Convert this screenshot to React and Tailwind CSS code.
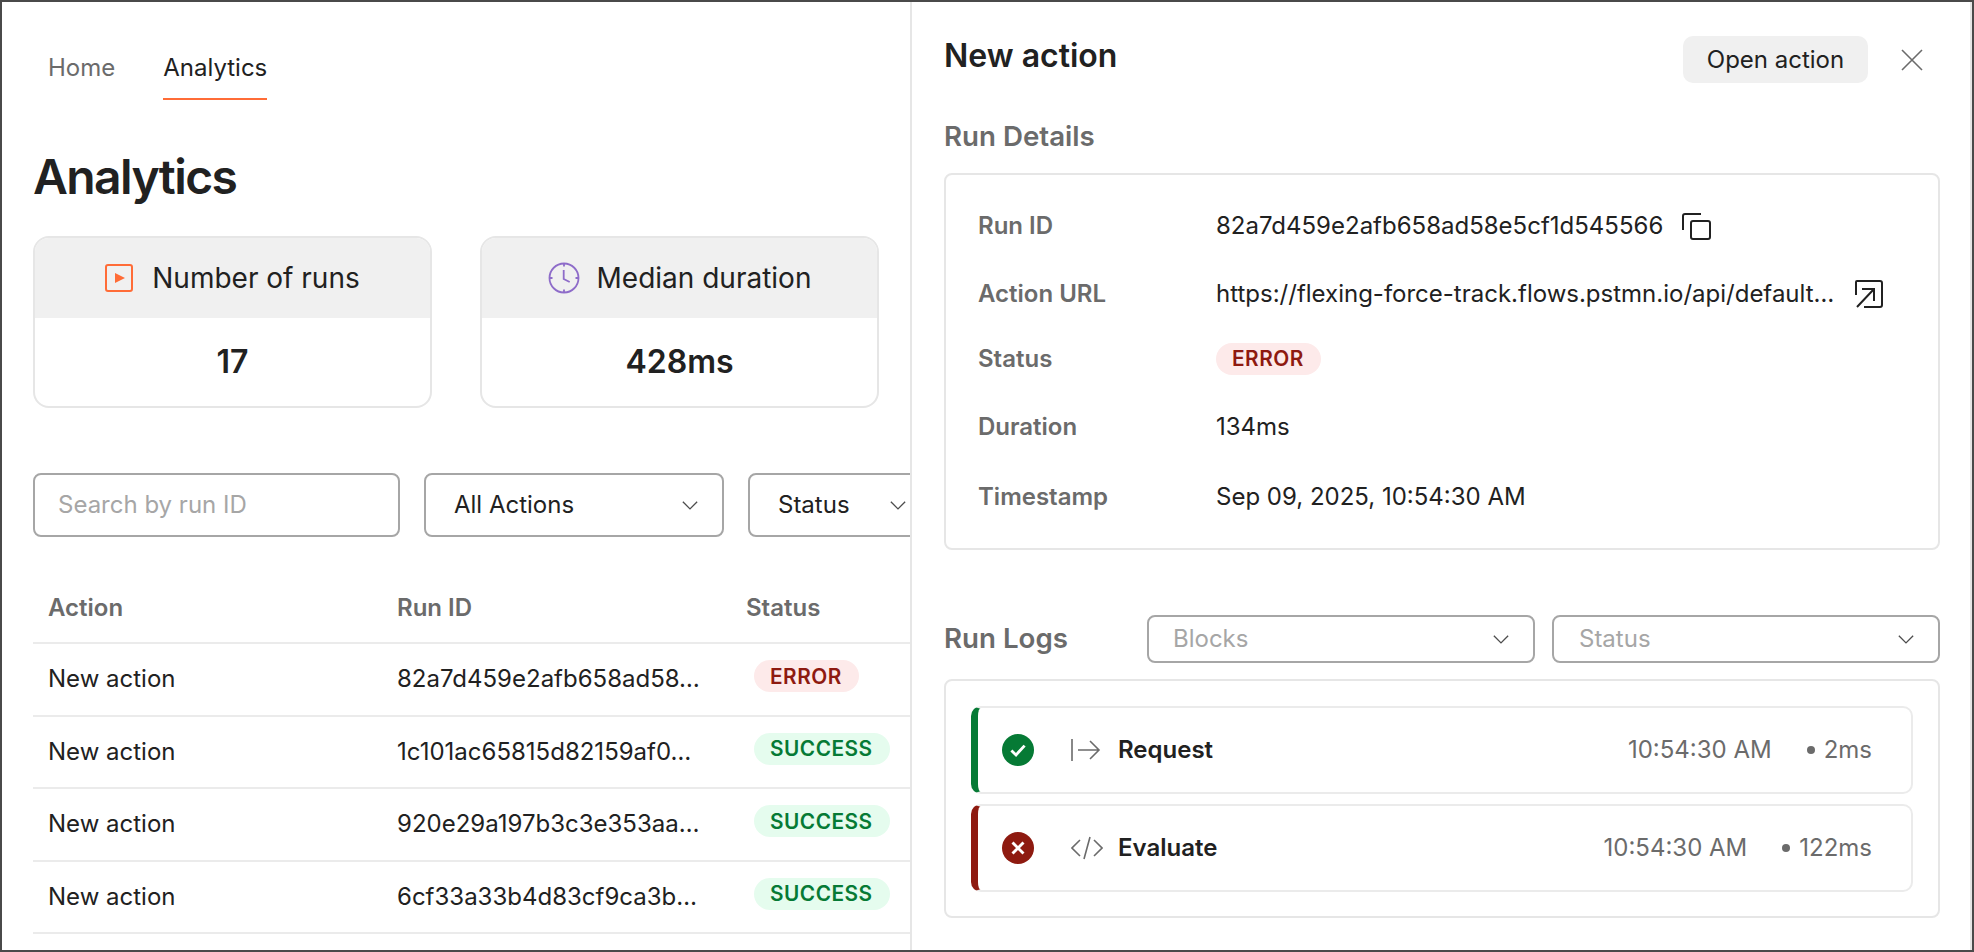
import React from "react";

const font = { fontFamily: "Inter, 'Liberation Sans', sans-serif" };

function Chevron({ className }) {
  return (
    <svg viewBox="0 0 20 20" fill="none" stroke="currentColor" strokeWidth="1.2" className={className}>
      <path d="M3.5 7 L10 13.5 L16.5 7" />
    </svg>
  );
}

function Select({ label, placeholder, className, chevronGap }) {
  return (
    <div className={`flex items-center justify-between rounded-[8px] border-2 border-[#a6a6a6] bg-white ${className}`}>
      <span className={placeholder ? "text-[#a6a6a6]" : "text-[#212121]"}>{label}</span>
      <Chevron className={`h-[22px] w-[22px] shrink-0 text-[#4d4d4d] ${chevronGap || ""}`} />
    </div>
  );
}

function Badge({ kind, className }) {
  const ok = kind === "SUCCESS";
  return (
    <span
      className={`inline-flex h-[32px] items-center rounded-full pr-[17px] pl-[16px] text-[20.8px] font-semibold tracking-[0.5px] ${
        ok ? "bg-[#e5fcee] text-[#067a35]" : "bg-[#fdeaea] text-[#8e1a10]"
      } ${className || ""}`}
    >
      {kind}
    </span>
  );
}

const rows = [
  ["82a7d459e2afb658ad58…", "ERROR"],
  ["1c101ac65815d82159af0…", "SUCCESS"],
  ["920e29a197b3c3e353aa…", "SUCCESS"],
  ["6cf33a33b4d83cf9ca3b…", "SUCCESS"],
];

function StatCard({ icon, title, value, gap }) {
  return (
    <div className="h-[172px] w-[399px] overflow-hidden rounded-[16px] border-2 border-[#e6e6e6]">
      <div className={`flex h-[80px] items-center justify-center bg-[#f0f0f0] text-[28px] text-[#212121] ${gap}`}>
        {icon}
        <span>{title}</span>
      </div>
      <div className="flex h-[88px] items-center justify-center text-[32px] font-semibold text-[#212121]">{value}</div>
    </div>
  );
}

function DetailRow({ label, children, className }) {
  return (
    <div className={`flex items-center ${className}`}>
      <div className="w-[238px] shrink-0 font-semibold text-[#6b6b6b]">{label}</div>
      <div className="flex items-center text-[#212121]">{children}</div>
    </div>
  );
}

function LogRow({ ok, name, icon, time, dur, className }) {
  return (
    <div
      className={`flex h-[88px] items-center rounded-[10px] border-2 border-l-[7px] border-[#ebebeb] ${
        ok ? "border-l-[#067a35]" : "border-l-[#8e1a10]"
      } ${className || ""}`}
    >
      <div className={`ml-[24px] flex h-[32px] w-[32px] items-center justify-center rounded-full ${ok ? "bg-[#067a35]" : "bg-[#8e1a10]"}`}>
        <svg viewBox="0 0 20 20" fill="none" stroke="white" strokeWidth="2.6" className="h-[22px] w-[22px]">
          {ok ? <path d="M4 10.5 L8.2 14.5 L16 6" /> : <path d="M5 5 L15 15 M15 5 L5 15" />}
        </svg>
      </div>
      <div className="ml-[37px] w-[30px]">{icon}</div>
      <span className="ml-[17px] font-semibold text-[#212121]">{name}</span>
      <span className="ml-auto text-[#6b6b6b]">{time}</span>
      <span className="mr-[39px] ml-[35px] flex items-center text-[#6b6b6b]">
        <span className="mr-[9px] h-[8px] w-[8px] rounded-full bg-[#6b6b6b]" />
        {dur}
      </span>
    </div>
  );
}

export default function App() {
  return (
    <div
      style={font}
      className="flex h-[952px] w-[1974px] overflow-hidden border-2 border-[#4a4a4a] bg-white text-[24px] text-[#212121]"
    >
      {/* Left panel */}
      <div className="w-[908px] shrink-0 overflow-hidden">
        <nav className="flex h-[98px] items-end gap-[48px] pl-[46px]">
          <div className="flex h-[60px] items-start pt-[10px] text-[#6b6b6b]">Home</div>
          <div className="flex h-[60px] items-start border-b-2 border-[#ff6c37] pt-[10px] text-[#212121]">Analytics</div>
        </nav>
        <div className="pl-[31px]">
          <h1 className="mt-[45px] text-[48px] leading-[64px] font-semibold tracking-[-1.6px] text-[#212121]">Analytics</h1>
          <div className="mt-[27px] flex gap-[48px]">
            <StatCard
              gap="gap-[19px]"
              title="Number of runs"
              value="17"
              icon={
                <svg viewBox="0 0 28 28" className="h-[28px] w-[28px]" fill="none">
                  <rect x="1" y="1" width="26" height="26" rx="2" stroke="#ff6c37" strokeWidth="2" />
                  <path d="M10 9 L20 14 L10 19 Z" fill="#ff6c37" />
                </svg>
              }
            />
            <StatCard
              gap="gap-[17px]"
              title="Median duration"
              value="428ms"
              icon={
                <svg viewBox="0 0 32 32" className="h-[32px] w-[32px]" fill="none" stroke="#8e6cc9" strokeWidth="1.8">
                  <circle cx="16" cy="16" r="14.5" />
                  <path d="M16 1.5 V4.5 M16 27.5 V30.5 M1.5 16 H4.5 M27.5 16 H30.5 M15.7 8 V17 L21.7 20" />
                </svg>
              }
            />
          </div>
          <div className="mt-[65px] flex w-[900px] gap-[24px]">
            <div className="flex h-[64px] w-[367px] shrink-0 items-center rounded-[8px] border-2 border-[#a6a6a6] pl-[23px] text-[#a6a6a6]">
              Search by run ID
            </div>
            <Select label="All Actions" className="h-[64px] w-[300px] shrink-0 pr-[21px] pl-[28px]" />
            <Select label="Status" className="h-[64px] w-[300px] shrink-0 pl-[28px]" chevronGap="mr-[137px]" />
          </div>
          <div className="mt-[37px]">
            <div className="flex h-[70px] items-center border-b-2 border-[#ebebeb] font-semibold text-[#6b6b6b]">
              <div className="w-[364px] shrink-0 pl-[15px]">Action</div>
              <div className="w-[349px] shrink-0">Run ID</div>
              <div>Status</div>
            </div>
            {rows.map(([id, st]) => (
              <div key={id} className="flex h-[72.5px] items-center border-b-2 border-[#ebebeb]">
                <div className="w-[364px] shrink-0 pl-[15px]">New action</div>
                <div className="w-[349px] shrink-0 whitespace-nowrap">{id}</div>
                <Badge kind={st} className="ml-[8px] -translate-y-[3px]" />
              </div>
            ))}
          </div>
        </div>
      </div>

      {/* Right panel */}
      <div className="h-full flex-1 border-x-2 border-[#e6e6e6] pr-[30px] pl-[32px]">
        <div className="flex h-[92px] items-start">
          <h2 className="mt-[30px] text-[32px] leading-[48px] font-semibold text-[#212121]">New action</h2>
          <button className="mt-[34px] ml-auto h-[47px] w-[185px] rounded-[10px] bg-[#f0f0f0] text-center text-[#212121]">Open action</button>
          <svg viewBox="0 0 22 22" fill="none" stroke="#6b6b6b" strokeWidth="1.6" className="mt-[47px] mr-[17px] ml-[33px] h-[22px] w-[22px]">
            <path d="M1 1 L21 21 M21 1 L1 21" />
          </svg>
        </div>
        <h3 className="mt-[22px] text-[27.7px] leading-[40px] font-semibold text-[#6b6b6b]">Run Details</h3>
        <div className="mt-[17px] h-[377px] rounded-[8px] border-2 border-[#e6e6e6] px-[32px] pt-[33px]">
          <DetailRow label="Run ID" className="h-[36px]">
            <span>82a7d459e2afb658ad58e5cf1d545566</span>
            <svg viewBox="0 0 29 27" fill="none" stroke="#212121" strokeWidth="2" className="ml-[19px] h-[27px] w-[29px]">
              <path d="M1 17 V3 Q1 1 3 1 H19" />
              <rect x="9" y="8" width="19" height="18" rx="2" />
            </svg>
          </DetailRow>
          <DetailRow label="Action URL" className="mt-[32px] h-[36px]">
            <span>https://flexing-force-track.flows.pstmn.io/api/default…</span>
            <svg viewBox="0 0 28 28" fill="none" stroke="#212121" strokeWidth="2" className="ml-[21px] h-[28px] w-[28px]">
              <path d="M1 15 V2 Q1 1 2 1 H25 Q27 1 27 3 V25 Q27 27 25 27 H9" />
              <path d="M2 27 L19 9 M7 9 H19 V21" />
            </svg>
          </DetailRow>
          <DetailRow label="Status" className="mt-[29px] h-[36px]">
            <Badge kind="ERROR" />
          </DetailRow>
          <DetailRow label="Duration" className="mt-[32px] h-[36px]">
            <span>134ms</span>
          </DetailRow>
          <DetailRow label="Timestamp" className="mt-[34px] h-[36px]">
            <span>Sep 09, 2025, 10:54:30 AM</span>
          </DetailRow>
        </div>
        <div className="mt-[65px] flex h-[48px] items-center">
          <h3 className="w-[203px] shrink-0 text-[27.7px] font-semibold text-[#6b6b6b]">Run Logs</h3>
          <Select label="Blocks" placeholder className="h-[48px] w-[388px] shrink-0 pr-[21px] pl-[24px]" />
          <Select label="Status" placeholder className="ml-[17px] h-[48px] w-[388px] shrink-0 pr-[21px] pl-[25px]" />
        </div>
        <div className="mt-[16px] h-[239px] rounded-[8px] border-2 border-[#e6e6e6] px-[25px] pt-[25px]">
          <LogRow
            ok
            name="Request"
            time="10:54:30 AM"
            dur="2ms"
            icon={
              <svg viewBox="0 0 30 24" fill="none" stroke="#6b6b6b" strokeWidth="1.6" className="h-[24px] w-[30px]">
                <path d="M1 1 V23 M7 12 H28 M19 3 L28 12 L19 21" />
              </svg>
            }
          />
          <LogRow
            name="Evaluate"
            time="10:54:30 AM"
            dur="122ms"
            className="mt-[10px]"
            icon={
              <svg viewBox="0 0 32 24" fill="none" stroke="#6b6b6b" strokeWidth="1.6" className="h-[24px] w-[32px]">
                <path d="M9 4 L1 12 L9 20 M23 4 L31 12 L23 20 M19 1 L13 23" />
              </svg>
            }
          />
        </div>
      </div>
    </div>
  );
}
